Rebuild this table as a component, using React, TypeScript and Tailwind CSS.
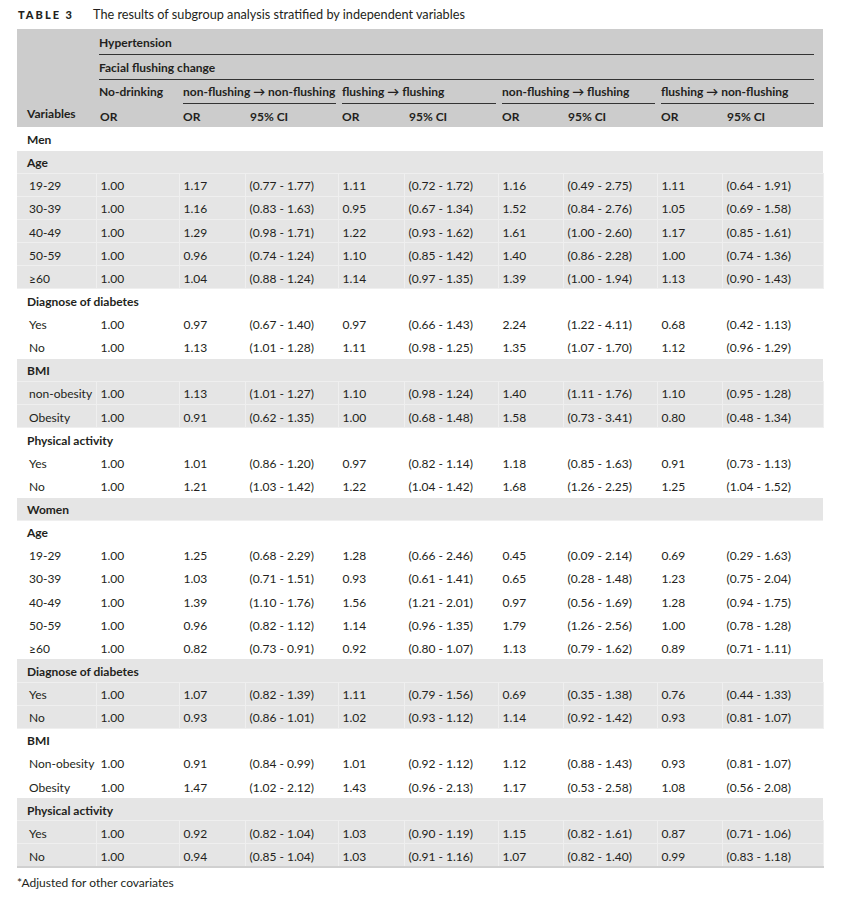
import React from "react";

/* ----------------------------- data ----------------------------- */
type Row = { label: string; values: string[] };
type Block = { title: string; rows: Row[] };

const r = (label: string, ...values: string[]): Row => ({ label, values });

const BLOCKS: Block[] = [
  { title: "Men", rows: [] },
  {
    title: "Age",
    rows: [
      r("19-29", "1.00", "1.17", "(0.77 - 1.77)", "1.11", "(0.72 - 1.72)", "1.16", "(0.49 - 2.75)", "1.11", "(0.64 - 1.91)"),
      r("30-39", "1.00", "1.16", "(0.83 - 1.63)", "0.95", "(0.67 - 1.34)", "1.52", "(0.84 - 2.76)", "1.05", "(0.69 - 1.58)"),
      r("40-49", "1.00", "1.29", "(0.98 - 1.71)", "1.22", "(0.93 - 1.62)", "1.61", "(1.00 - 2.60)", "1.17", "(0.85 - 1.61)"),
      r("50-59", "1.00", "0.96", "(0.74 - 1.24)", "1.10", "(0.85 - 1.42)", "1.40", "(0.86 - 2.28)", "1.00", "(0.74 - 1.36)"),
      r("≥60", "1.00", "1.04", "(0.88 - 1.24)", "1.14", "(0.97 - 1.35)", "1.39", "(1.00 - 1.94)", "1.13", "(0.90 - 1.43)"),
    ],
  },
  {
    title: "Diagnose of diabetes",
    rows: [
      r("Yes", "1.00", "0.97", "(0.67 - 1.40)", "0.97", "(0.66 - 1.43)", "2.24", "(1.22 - 4.11)", "0.68", "(0.42 - 1.13)"),
      r("No", "1.00", "1.13", "(1.01 - 1.28)", "1.11", "(0.98 - 1.25)", "1.35", "(1.07 - 1.70)", "1.12", "(0.96 - 1.29)"),
    ],
  },
  {
    title: "BMI",
    rows: [
      r("non-obesity", "1.00", "1.13", "(1.01 - 1.27)", "1.10", "(0.98 - 1.24)", "1.40", "(1.11 - 1.76)", "1.10", "(0.95 - 1.28)"),
      r("Obesity", "1.00", "0.91", "(0.62 - 1.35)", "1.00", "(0.68 - 1.48)", "1.58", "(0.73 - 3.41)", "0.80", "(0.48 - 1.34)"),
    ],
  },
  {
    title: "Physical activity",
    rows: [
      r("Yes", "1.00", "1.01", "(0.86 - 1.20)", "0.97", "(0.82 - 1.14)", "1.18", "(0.85 - 1.63)", "0.91", "(0.73 - 1.13)"),
      r("No", "1.00", "1.21", "(1.03 - 1.42)", "1.22", "(1.04 - 1.42)", "1.68", "(1.26 - 2.25)", "1.25", "(1.04 - 1.52)"),
    ],
  },
  { title: "Women", rows: [] },
  {
    title: "Age",
    rows: [
      r("19-29", "1.00", "1.25", "(0.68 - 2.29)", "1.28", "(0.66 - 2.46)", "0.45", "(0.09 - 2.14)", "0.69", "(0.29 - 1.63)"),
      r("30-39", "1.00", "1.03", "(0.71 - 1.51)", "0.93", "(0.61 - 1.41)", "0.65", "(0.28 - 1.48)", "1.23", "(0.75 - 2.04)"),
      r("40-49", "1.00", "1.39", "(1.10 - 1.76)", "1.56", "(1.21 - 2.01)", "0.97", "(0.56 - 1.69)", "1.28", "(0.94 - 1.75)"),
      r("50-59", "1.00", "0.96", "(0.82 - 1.12)", "1.14", "(0.96 - 1.35)", "1.79", "(1.26 - 2.56)", "1.00", "(0.78 - 1.28)"),
      r("≥60", "1.00", "0.82", "(0.73 - 0.91)", "0.92", "(0.80 - 1.07)", "1.13", "(0.79 - 1.62)", "0.89", "(0.71 - 1.11)"),
    ],
  },
  {
    title: "Diagnose of diabetes",
    rows: [
      r("Yes", "1.00", "1.07", "(0.82 - 1.39)", "1.11", "(0.79 - 1.56)", "0.69", "(0.35 - 1.38)", "0.76", "(0.44 - 1.33)"),
      r("No", "1.00", "0.93", "(0.86 - 1.01)", "1.02", "(0.93 - 1.12)", "1.14", "(0.92 - 1.42)", "0.93", "(0.81 - 1.07)"),
    ],
  },
  {
    title: "BMI",
    rows: [
      r("Non-obesity", "1.00", "0.91", "(0.84 - 0.99)", "1.01", "(0.92 - 1.12)", "1.12", "(0.88 - 1.43)", "0.93", "(0.81 - 1.07)"),
      r("Obesity", "1.00", "1.47", "(1.02 - 2.12)", "1.43", "(0.96 - 2.13)", "1.17", "(0.53 - 2.58)", "1.08", "(0.56 - 2.08)"),
    ],
  },
  {
    title: "Physical activity",
    rows: [
      r("Yes", "1.00", "0.92", "(0.82 - 1.04)", "1.03", "(0.90 - 1.19)", "1.15", "(0.82 - 1.61)", "0.87", "(0.71 - 1.06)"),
      r("No", "1.00", "0.94", "(0.85 - 1.04)", "1.03", "(0.91 - 1.16)", "1.07", "(0.82 - 1.40)", "0.99", "(0.83 - 1.18)"),
    ],
  },
];

/* column widths, px — sum is the table width (806) */
const COLS = [79, 83, 66, 93, 66, 94, 65, 94, 65, 101];

const GROUPS = [
  "non-flushing → non-flushing",
  "flushing → flushing",
  "non-flushing → flushing",
  "flushing → non-flushing",
];

/* --------------------------- header --------------------------- */
function Header() {
  return (
    <thead className="bg-[#cccccc] font-bold">
      <tr>
        <th rowSpan={4} className="align-bottom pl-[10px] pb-[5px] text-left font-bold">
          Variables
        </th>
        <th colSpan={9} className="pl-[3px] pr-[9px] text-left font-bold">
          <div className="h-[26px] pt-[6px] border-b border-[#333]">Hypertension</div>
        </th>
      </tr>
      <tr>
        <th colSpan={9} className="pl-[3px] pr-[9px] text-left font-bold">
          <div className="h-[25px] pt-[5px] border-b border-[#333]">Facial flushing change</div>
        </th>
      </tr>
      <tr>
        <th className="pl-[3px] text-left font-bold align-top">
          <div className="h-[24px] pt-[4px]">No-drinking</div>
        </th>
        {GROUPS.map((g, i) => (
          <th
            key={g}
            colSpan={2}
            className={`pl-[4px] text-left font-bold ${i === 3 ? "pr-[9px]" : "pr-[2px]"}`}
          >
            <div className="h-[24px] pt-[4px] border-b border-[#333] whitespace-nowrap">{g}</div>
          </th>
        ))}
      </tr>
      <tr>
        <th className="pl-[4px] text-left font-bold">
          <div className="h-[23px] pt-[5px]">OR</div>
        </th>
        {GROUPS.map((g) => (
          <React.Fragment key={g}>
            <th className="pl-[4px] text-left font-bold">
              <div className="h-[23px] pt-[5px]">OR</div>
            </th>
            <th className="pl-[5px] text-left font-bold">
              <div className="h-[23px] pt-[5px]">95% CI</div>
            </th>
          </React.Fragment>
        ))}
      </tr>
    </thead>
  );
}

/* ---------------------------- body ---------------------------- */
function BlockRows({ block, shaded }: { block: Block; shaded: boolean }) {
  const bg = shaded ? "bg-[#e5e5e5]" : "bg-white";
  const line = shaded ? "border-[#efefef]" : "border-white";
  return (
    <>
      <tr className={`${bg} h-[23.13px]`}>
        <td colSpan={10} className={`pl-[10px] pt-[3px] font-bold border-b ${line}`}>
          {block.title}
        </td>
      </tr>
      {block.rows.map((row, i) => (
        <tr key={row.label + i} className={`${bg} h-[23.13px]`}>
          <td className={`pl-[12px] pt-[3px] whitespace-nowrap border-b border-r ${line}`}>{row.label}</td>
          {row.values.map((v, j) => (
            <td key={j} className={`pl-[4px] pt-[3px] whitespace-nowrap border-b border-r ${line}`}>
              {v}
            </td>
          ))}
        </tr>
      ))}
    </>
  );
}

/* ---------------------------- page ---------------------------- */
export default function App() {
  return (
    <div className="min-h-screen bg-white pl-[17px] pt-[5px] text-[#231f20] font-['Lato','Liberation_Sans',sans-serif]">
      <div className="flex items-baseline h-[24px]">
        <span className="pl-[1px] w-[76px] text-[11px] font-black tracking-[2px]">TABLE 3</span>
        <span className="text-[12.7px]">The results of subgroup analysis stratified by independent variables</span>
      </div>

      <table className="table-fixed border-collapse w-[806px] text-[12px] leading-[16px]">
        <colgroup>
          {COLS.map((w, i) => (
            <col key={i} style={{ width: w }} />
          ))}
        </colgroup>
        <Header />
        <tbody className="border-b-2 border-[#d0d0d0]">
          {BLOCKS.map((b, i) => (
            <BlockRows key={b.title + i} block={b} shaded={i % 2 === 1} />
          ))}
        </tbody>
      </table>

      <p className="mt-[7px] text-[12px] leading-[16px]">*Adjusted for other covariates</p>
    </div>
  );
}
